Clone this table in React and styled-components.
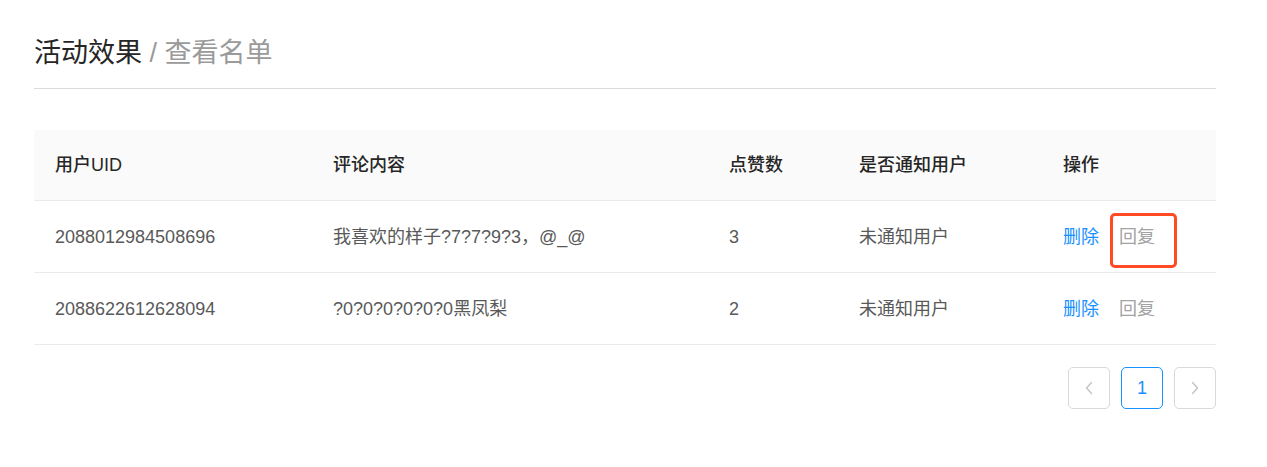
import React from "react";
import styled, { createGlobalStyle } from "styled-components";

const Global = createGlobalStyle`
  html, body { margin: 0; padding: 0; background: #fff; }
  body { font-family: "Liberation Sans", "Noto Sans CJK SC", sans-serif; }
`;

const Page = styled.div`
  padding: 34px 51px 40px 34px;
  width: 1182px;
`;

const Header = styled.div`
  font-size: 27px;
  line-height: 38px;
  padding-bottom: 16px;
  border-bottom: 1px solid #dcdcdc;
  color: #262626;
`;

const Sub = styled.span`
  color: #9a9a9a;
`;

const Table = styled.div`
  margin-top: 41px;
  display: grid;
  grid-template-columns: 278px 396px 130px 204px 174px;
  font-size: 18px;
  line-height: 24px;
`;

const Cell = styled.div`
  display: flex;
  align-items: center;
  padding-left: 21px;
  height: ${(p) => (p.$head ? "70px" : "71px")};
  border-bottom: 1px solid #ebebeb;
  background: ${(p) => (p.$head ? "#fafafa" : "#fff")};
  color: ${(p) => (p.$head ? "#262626" : "#595959")};
  font-weight: ${(p) => (p.$head ? 500 : 400)};
  position: relative;
`;

const Link = styled.span`
  color: ${(p) => (p.$muted ? "#a3a3a3" : "#1890ff")};
  margin-right: 20px;
  cursor: pointer;
`;

const Highlight = styled.div`
  position: absolute;
  left: 68px;
  top: 12px;
  width: 61px;
  height: 49px;
  border: 3px solid #ff4a24;
  border-radius: 5px;
  pointer-events: none;
`;

const Pager = styled.div`
  display: flex;
  justify-content: flex-end;
  gap: 11px;
  margin-top: 22px;
`;

const PageBtn = styled.div`
  width: 40px;
  height: 40px;
  border: 1px solid ${(p) => (p.$active ? "#1890ff" : "#d9d9d9")};
  border-radius: 5px;
  display: flex;
  align-items: center;
  justify-content: center;
  color: ${(p) => (p.$active ? "#1890ff" : "#bfbfbf")};
  font-size: 18px;
  line-height: 24px;
`;

const Chevron = ({ dir }) => (
  <svg width="10" height="14" viewBox="0 0 10 14" fill="none">
    <path
      d={dir === "left" ? "M7.5 1.5 L2.5 7 L7.5 12.5" : "M2.5 1.5 L7.5 7 L2.5 12.5"}
      stroke="#bfbfbf"
      strokeWidth="1.2"
      strokeLinecap="round"
      strokeLinejoin="round"
    />
  </svg>
);

const heads = ["用户UID", "评论内容", "点赞数", "是否通知用户", "操作"];
const rows = [
  ["2088012984508696", "我喜欢的样子?7?7?9?3，@_@", "3", "未通知用户", true],
  ["2088622612628094", "?0?0?0?0?0?0黑凤梨", "2", "未通知用户", false],
];

export default function App() {
  return (
    <Page>
      <Global />
      <Header>
        活动效果 <Sub>/ 查看名单</Sub>
      </Header>
      <Table>
        {heads.map((h) => (
          <Cell $head key={h}>{h}</Cell>
        ))}
        {rows.map((r) => (
          <React.Fragment key={r[0]}>
            <Cell>{r[0]}</Cell>
            <Cell>{r[1]}</Cell>
            <Cell>{r[2]}</Cell>
            <Cell>{r[3]}</Cell>
            <Cell>
              <Link>删除</Link>
              <Link $muted>回复</Link>
              {r[4] && <Highlight />}
            </Cell>
          </React.Fragment>
        ))}
      </Table>
      <Pager>
        <PageBtn><Chevron dir="left" /></PageBtn>
        <PageBtn $active>1</PageBtn>
        <PageBtn><Chevron dir="right" /></PageBtn>
      </Pager>
    </Page>
  );
}
